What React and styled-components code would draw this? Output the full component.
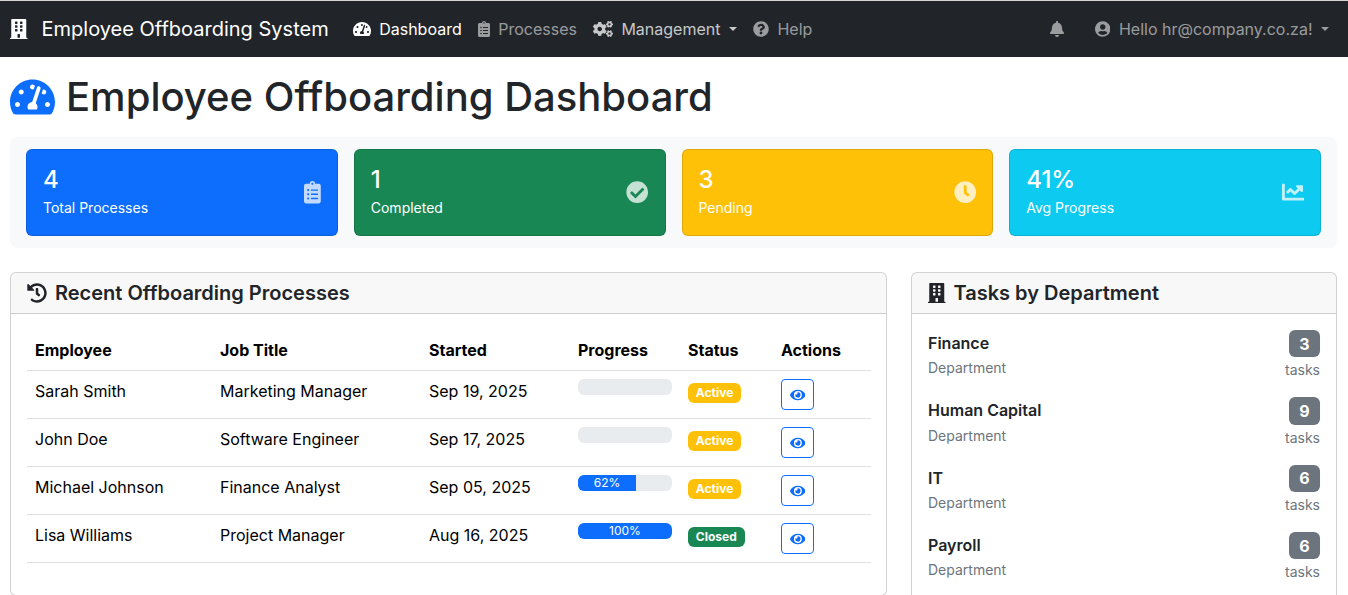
import React from "react";
import styled, { createGlobalStyle } from "styled-components";
import {
  FaBell,
  FaBuilding,
  FaChartLine,
  FaCheckCircle,
  FaClipboardList,
  FaClock,
  FaCogs,
  FaEye,
  FaHistory,
  FaQuestionCircle,
  FaTachometerAlt,
  FaUserCircle,
} from "react-icons/fa";

const GlobalStyle = createGlobalStyle`
  * { box-sizing: border-box; }
  html, body {
    margin: 0;
    height: 100%;
    overflow: hidden;
    background: #fff;
    color: #212529;
    font-family: Inter, "Liberation Sans", sans-serif;
    font-size: 16px;
    line-height: 1.5;
  }
`;

// react-icons draws every glyph in a square, the icon font does not
const sized = (Icon, ratio) => styled(Icon)`
  width: ${ratio}em;
  height: 1em;
  flex-shrink: 0;
`;

const BuildingIcon = sized(FaBuilding, 0.875);
const GaugeIcon = sized(FaTachometerAlt, 1.125);
const ClipboardIcon = sized(FaClipboardList, 0.75);
const CogsIcon = sized(FaCogs, 1.25);
const HelpIcon = sized(FaQuestionCircle, 1);
const BellIcon = sized(FaBell, 0.875);
const UserIcon = sized(FaUserCircle, 0.97);
const CheckIcon = sized(FaCheckCircle, 1);
const ClockIcon = sized(FaClock, 1);
const ChartIcon = sized(FaChartLine, 1);
const HistoryIcon = sized(FaHistory, 1);
const EyeIcon = sized(FaEye, 1.125);

const Navbar = styled.nav`
  display: flex;
  align-items: center;
  height: 57px;
  padding: 0 11px 0 10px;
  background: #212529;
  border-top: 1px solid #d4d4d4;
`;

const Brand = styled.div`
  display: flex;
  align-items: center;
  gap: 14px;
  margin-right: 16px;
  color: #fff;
  font-size: 20px;
`;

const NavGroup = styled.div`
  display: flex;
  align-items: center;
  margin-left: ${(p) => (p.$right ? "auto" : "0")};
`;

const NavLink = styled.a`
  display: flex;
  align-items: center;
  gap: 8.5px;
  padding: 0 8px;
  color: ${(p) => p.$color || "rgba(255, 255, 255, 0.55)"};
  white-space: nowrap;

  ${(p) =>
    p.$caret &&
    `&::after {
      content: "";
      border-top: 4.8px solid;
      border-left: 4.8px solid transparent;
      border-right: 4.8px solid transparent;
    }`}
`;

const BellLink = styled(NavLink)`
  margin-right: 15px;
`;

const Page = styled.main`
  padding: 0 11px 0 10px;
`;

const Title = styled.h1`
  display: flex;
  align-items: center;
  gap: 11px;
  margin: 16px 0;
  font-size: 40px;
  font-weight: 500;
  line-height: 1.2;
  color: #212529;

  svg {
    color: #0d6efd;
  }
`;

const StatsPanel = styled.section`
  display: grid;
  grid-template-columns: repeat(4, 1fr);
  gap: 16px;
  padding: 12px 16px;
  margin-bottom: 24px;
  background: #f8f9fa;
  border-radius: 8px;
`;

const StatCard = styled.div`
  display: flex;
  align-items: center;
  justify-content: space-between;
  height: 87px;
  padding: 16px;
  color: #fff;
  background: ${(p) => p.$bg};
  border: 1px solid rgba(0, 0, 0, 0.125);
  border-radius: 6px;

  svg {
    font-size: 22.4px;
    opacity: 0.75;
  }
`;

const StatText = styled.div`
  align-self: flex-start;
`;

const StatValue = styled.div`
  margin-bottom: 2px;
  font-size: 24px;
  font-weight: 500;
  line-height: 1.2;
`;

const StatLabel = styled.div`
  font-size: 14px;
`;

const Columns = styled.div`
  display: grid;
  grid-template-columns: 877fr 426fr;
  gap: 24px;
  align-items: start;
`;

const Card = styled.section`
  background: #fff;
  border: 1px solid rgba(0, 0, 0, 0.175);
  border-radius: 6px;
  overflow: hidden;
`;

const CardHeader = styled.h5`
  display: flex;
  align-items: center;
  gap: 8px;
  margin: 0;
  padding: 8px 16px;
  font-size: 20px;
  font-weight: 600;
  line-height: 1.2;
  color: #212529;
  background: rgba(33, 37, 41, 0.03);
  border-bottom: 1px solid rgba(0, 0, 0, 0.175);
`;

const CardBody = styled.div`
  padding: 16px;
`;

const Table = styled.table`
  width: 100%;
  margin-bottom: 16px;
  border-collapse: collapse;
  table-layout: fixed;
`;

const Th = styled.th`
  width: ${(p) => p.$w}px;
  padding: 8px;
  font-weight: 700;
  text-align: left;
  color: #000;
  border-bottom: 1px solid #dee2e6;
`;

const Td = styled.td`
  padding: 8px;
  vertical-align: top;
  color: #000;
  border-bottom: 1px solid #dee2e6;
`;

const Progress = styled.div`
  display: flex;
  height: 16px;
  overflow: hidden;
  background: #e9ecef;
  border-radius: 6px;
`;

const ProgressBar = styled.div`
  display: flex;
  justify-content: center;
  align-items: center;
  background: #0d6efd;
  color: #fff;
  font-size: 12px;
  line-height: 16px;
`;

const Badge = styled.span`
  display: inline-block;
  padding: 4.2px 7.8px;
  font-size: 12px;
  font-weight: 700;
  line-height: 1;
  color: #fff;
  background: ${(p) => p.$bg};
  border-radius: 6px;
`;

const ViewButton = styled.button`
  display: flex;
  align-items: center;
  justify-content: center;
  width: 33px;
  height: 31px;
  padding: 0;
  font-size: 14px;
  color: #0d6efd;
  background: transparent;
  border: 1px solid #0d6efd;
  border-radius: 4px;
`;

const DeptRow = styled.div`
  display: flex;
  align-items: center;
  justify-content: space-between;
  margin-bottom: 17.2px;
`;

const DeptInfo = styled.div`
  padding-top: 2px;
`;

const DeptName = styled.h6`
  margin: 0 0 4px;
  font-size: 16px;
  font-weight: 600;
  line-height: 1.2;
  color: #212529;
`;

const Muted = styled.small`
  display: block;
  font-size: 14px;
  color: #6c757d;
`;

const DeptCount = styled.div`
  text-align: right;

  ${Muted} {
    margin-top: 2px;
  }
`;

const CountBadge = styled.span`
  display: inline-block;
  padding: 5.6px 10.4px;
  font-size: 16px;
  font-weight: 700;
  line-height: 1;
  color: #fff;
  background: #6c757d;
  border-radius: 6px;
`;

const stats = [
  { value: "4", label: "Total Processes", bg: "#0d6efd", Icon: ClipboardIcon },
  { value: "1", label: "Completed", bg: "#198754", Icon: CheckIcon },
  { value: "3", label: "Pending", bg: "#ffc107", Icon: ClockIcon },
  { value: "41%", label: "Avg Progress", bg: "#0dcaf0", Icon: ChartIcon },
];

const processes = [
  { name: "Sarah Smith", job: "Marketing Manager", started: "Sep 19, 2025", progress: 0, status: "Active" },
  { name: "John Doe", job: "Software Engineer", started: "Sep 17, 2025", progress: 0, status: "Active" },
  { name: "Michael Johnson", job: "Finance Analyst", started: "Sep 05, 2025", progress: 62, status: "Active" },
  { name: "Lisa Williams", job: "Project Manager", started: "Aug 16, 2025", progress: 100, status: "Closed" },
];

const departments = [
  { name: "Finance", tasks: 3 },
  { name: "Human Capital", tasks: 9 },
  { name: "IT", tasks: 6 },
  { name: "Payroll", tasks: 6 },
];

export default function App() {
  return (
    <>
      <GlobalStyle />
      <Navbar>
        <Brand>
          <BuildingIcon />
          Employee Offboarding System
        </Brand>
        <NavGroup>
          <NavLink $color="#fff">
            <GaugeIcon />
            Dashboard
          </NavLink>
          <NavLink>
            <ClipboardIcon />
            Processes
          </NavLink>
          <NavLink $color="rgba(255, 255, 255, 0.75)" $caret>
            <CogsIcon />
            Management
          </NavLink>
          <NavLink>
            <HelpIcon />
            Help
          </NavLink>
        </NavGroup>
        <NavGroup $right>
          <BellLink>
            <BellIcon />
          </BellLink>
          <NavLink $caret>
            <UserIcon />
            Hello hr@company.co.za!
          </NavLink>
        </NavGroup>
      </Navbar>
      <Page>
        <Title>
          <GaugeIcon />
          Employee Offboarding Dashboard
        </Title>
        <StatsPanel>
          {stats.map(({ value, label, bg, Icon }) => (
            <StatCard key={label} $bg={bg}>
              <StatText>
                <StatValue>{value}</StatValue>
                <StatLabel>{label}</StatLabel>
              </StatText>
              <Icon />
            </StatCard>
          ))}
        </StatsPanel>
        <Columns>
          <Card>
            <CardHeader>
              <HistoryIcon />
              Recent Offboarding Processes
            </CardHeader>
            <CardBody>
              <Table>
                <thead>
                  <tr>
                    <Th $w={185}>Employee</Th>
                    <Th $w={209}>Job Title</Th>
                    <Th $w={149}>Started</Th>
                    <Th $w={110}>Progress</Th>
                    <Th $w={93}>Status</Th>
                    <Th $w={98}>Actions</Th>
                  </tr>
                </thead>
                <tbody>
                  {processes.map((p) => (
                    <tr key={p.name}>
                      <Td>{p.name}</Td>
                      <Td>{p.job}</Td>
                      <Td>{p.started}</Td>
                      <Td>
                        <Progress>
                          {p.progress > 0 && (
                            <ProgressBar style={{ width: `${p.progress}%` }}>{p.progress}%</ProgressBar>
                          )}
                        </Progress>
                      </Td>
                      <Td>
                        <Badge $bg={p.status === "Closed" ? "#198754" : "#ffc107"}>{p.status}</Badge>
                      </Td>
                      <Td>
                        <ViewButton>
                          <EyeIcon />
                        </ViewButton>
                      </Td>
                    </tr>
                  ))}
                </tbody>
              </Table>
            </CardBody>
          </Card>
          <Card>
            <CardHeader>
              <BuildingIcon />
              Tasks by Department
            </CardHeader>
            <CardBody>
              {departments.map((d) => (
                <DeptRow key={d.name}>
                  <DeptInfo>
                    <DeptName>{d.name}</DeptName>
                    <Muted>Department</Muted>
                  </DeptInfo>
                  <DeptCount>
                    <CountBadge>{d.tasks}</CountBadge>
                    <Muted>tasks</Muted>
                  </DeptCount>
                </DeptRow>
              ))}
            </CardBody>
          </Card>
        </Columns>
      </Page>
    </>
  );
}
